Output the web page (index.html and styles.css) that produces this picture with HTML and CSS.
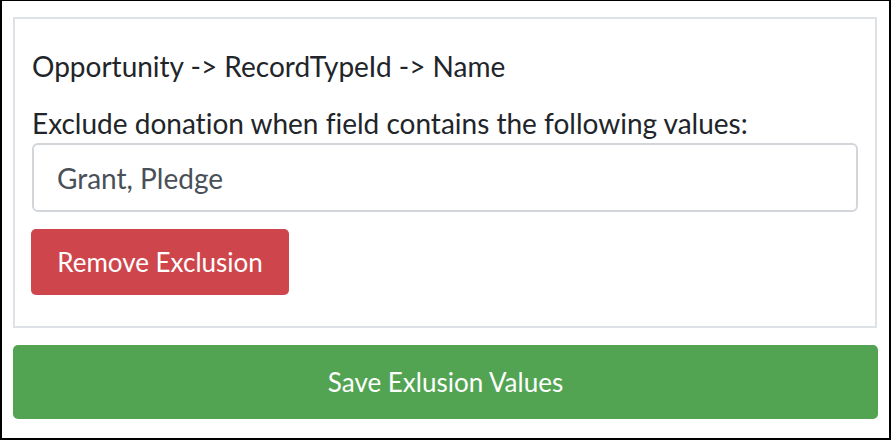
FILE: index.html
```html
<!DOCTYPE html>
<html>
<head>
<meta charset="utf-8">
<link rel="stylesheet" href="styles.css">
</head>
<body>
<div class="frame">
  <div class="panel">
    <p class="path">Opportunity -&gt; RecordTypeId -&gt; Name</p>
    <label class="label">Exclude donation when field contains the following values:</label>
    <div class="input">Grant, Pledge</div>
    <div class="actions"><button class="btn btn-danger">Remove Exclusion</button></div>
  </div>
  <button class="btn btn-success">Save Exlusion Values</button>
</div>
</body>
</html>
```
FILE: styles.css
```css
* { box-sizing: border-box; }
html, body { margin: 0; padding: 0; background: #fff; }
body { font-family: Lato, "Open Sans", sans-serif; color: #212529; }
.frame {
  width: 891px;
  height: 440px;
  border-style: solid;
  border-color: #000;
  border-width: 1px 2px 2px 2px;
  padding: 16px 12px 0 11px;
  display: flex;
  flex-direction: column;
}
.panel {
  border: 2px solid #dee2e6;
  padding: 30px 17px 31px 17px;
  display: flex;
  flex-direction: column;
  align-items: flex-start;
}
.path {
  margin: 0;
  font-size: 28px;
  line-height: 34px;
}
.label {
  margin-top: 23px;
  font-size: 28px;
  line-height: 34px;
  font-variant-ligatures: none;
}
.input {
  align-self: stretch;
  margin-top: 3px;
  height: 69px;
  border: 2px solid #d2d6da;
  border-radius: 6px;
  padding: 0 23px;
  display: flex;
  align-items: center;
  font-size: 28px;
  color: #495057;
}
.actions { margin-top: 17px; display: flex; }
.btn {
  font-family: Lato, "Open Sans", sans-serif;
  font-size: 26px;
  color: #fff;
  border: none;
  border-radius: 5px;
  display: flex;
  align-items: center;
  justify-content: center;
  cursor: pointer;
}
.btn-danger {
  margin-left: -1px;
  width: 258px;
  height: 66px;
  background: #cf454c;
}
.btn-success {
  margin-top: 17px;
  width: 865px;
  height: 74px;
  background: #52a453;
}
```
